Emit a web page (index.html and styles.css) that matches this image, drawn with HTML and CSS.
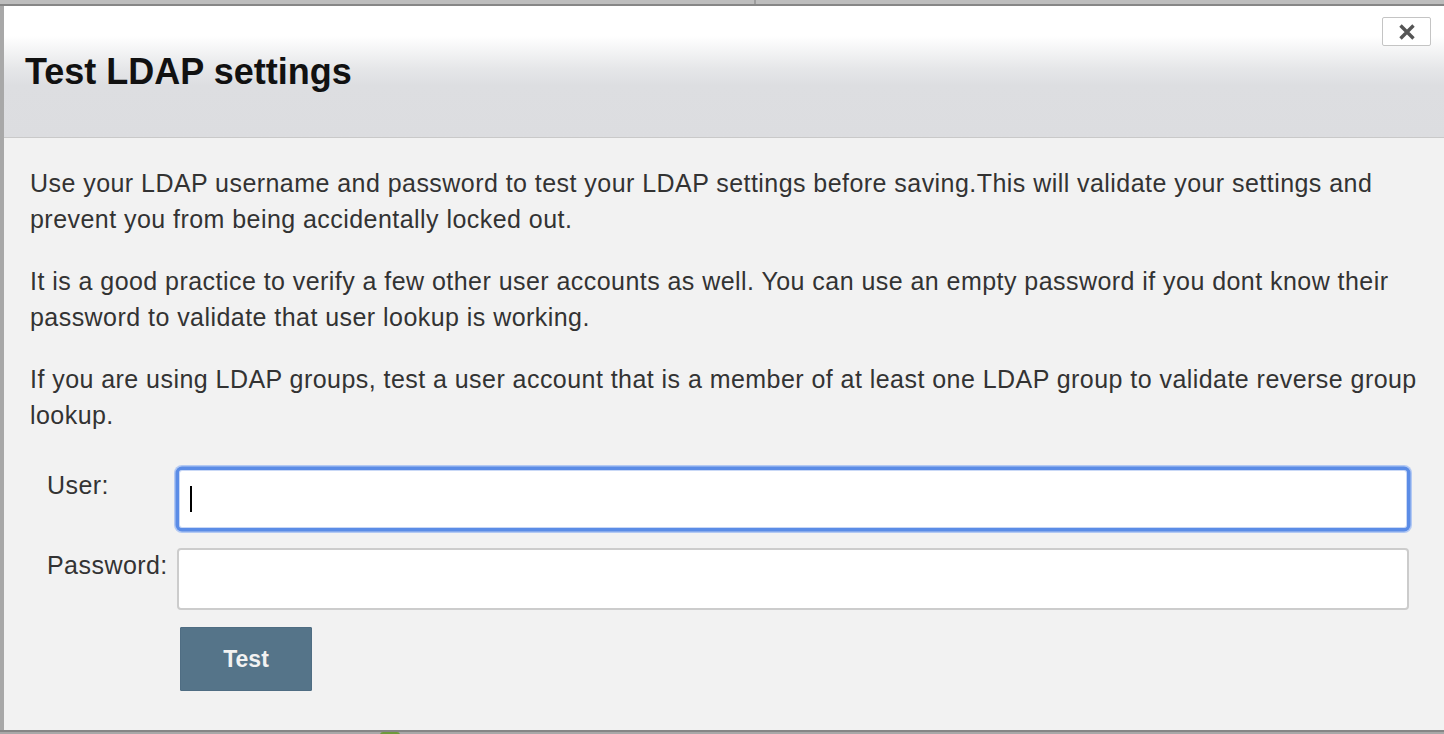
FILE: index.html
```html
<!DOCTYPE html>
<html lang="en">
<head>
<meta charset="utf-8">
<title>Test LDAP settings</title>
<link rel="stylesheet" href="styles.css">
</head>
<body>
<div class="topstrip">
  <div class="pane pane-left"></div>
  <div class="pane pane-right"></div>
</div>
<div class="stage">
  <div class="dialog">
    <div class="dialog-header">
      <h1 class="dialog-title">Test LDAP settings</h1>
      <button class="close-btn" type="button" aria-label="Close">
        <svg width="20" height="16" viewBox="0 0 20 16" aria-hidden="true">
          <path d="M3.5 1.5 L16.5 14.5 M16.5 1.5 L3.5 14.5" stroke="#555" stroke-width="3.4" stroke-linecap="butt"/>
        </svg>
      </button>
    </div>
    <div class="dialog-body">
      <p>Use your LDAP username and password to test your LDAP settings before saving.This will validate your settings and prevent you from being accidentally locked out.</p>
      <p>It is a good practice to verify a few other user accounts as well. You can use an empty password if you dont know their password to validate that user lookup is working.</p>
      <p>If you are using LDAP groups, test a user account that is a member of at least one LDAP group to validate reverse group lookup.</p>
      <form class="ldap-form" onsubmit="return false">
        <label class="field-label" for="ldap-user">User:</label>
        <div class="field-wrap">
          <input id="ldap-user" class="field-input is-focused" type="text">
          <span class="caret"></span>
        </div>
        <label class="field-label" for="ldap-pass">Password:</label>
        <div class="field-wrap">
          <input id="ldap-pass" class="field-input" type="password">
        </div>
        <div class="actions">
          <button class="test-btn" type="submit">Test</button>
        </div>
      </form>
    </div>
  </div>
</div>
<div class="bottomstrip">
  <span class="leaf"></span>
</div>
</body>
</html>
```

FILE: styles.css
```css
html, body {
  margin: 0;
  padding: 0;
  height: 734px;
  overflow: hidden;
}

body {
  background: #a8a8a8;
  font-family: "Liberation Sans", Arial, Helvetica, sans-serif;
  display: flex;
  flex-direction: column;
}

.topstrip {
  height: 4px;
  display: flex;
  background: #bdbdbd;
  border-bottom: 2px solid #868686;
}

.pane-left {
  width: 754px;
  border-right: 2px solid #9d9d9d;
}

.pane-right {
  flex: 1;
}

.stage {
  padding-left: 4px;
}

.dialog {
  background: #f2f2f2;
  height: 724px;
  display: flex;
  flex-direction: column;
}

.dialog-header {
  position: relative;
  height: 131px;
  border-bottom: 1px solid #c9c9c9;
  background: linear-gradient(to bottom, #ffffff 0px, #ffffff 30px, #e6e7e9 62px, #dddee1 80px, #dcdde0 100%);
  padding-left: 21px;
  display: flex;
  align-items: flex-start;
}

.dialog-title {
  margin: 45px 0 0;
  font-size: 36px;
  line-height: 42px;
  font-weight: bold;
  color: #111;
}

.close-btn {
  position: absolute;
  top: 11px;
  right: 13px;
  width: 49px;
  height: 29px;
  padding: 0;
  background: #fff;
  border: 1px solid #c4c4c4;
  border-radius: 2px;
  display: flex;
  align-items: center;
  justify-content: center;
}

.dialog-body {
  flex: 1;
  padding: 28px 20px 0 26px;
  color: #333;
  font-size: 25px;
  letter-spacing: 0.45px;
  line-height: 35.5px;
}

.dialog-body p {
  margin: 0 0 27px;
}

.ldap-form {
  margin-top: 0;
  padding-top: 8px;
  display: grid;
  grid-template-columns: 130px 1fr;
  row-gap: 18px;
  padding-left: 17px;
  padding-right: 15px;
}

.field-label {
  color: #333;
  line-height: 35px;
  white-space: nowrap;
}

.field-wrap {
  position: relative;
}

.field-input {
  display: block;
  box-sizing: border-box;
  width: 100%;
  height: 62px;
  margin: 0;
  border: 2px solid #cccccc;
  border-radius: 4px;
  background: #fff;
  font: inherit;
  padding: 0 12px;
  outline: none;
}

.field-input.is-focused {
  border: 2px solid #5b8ce6;
  box-shadow: 0 0 0 1.5px #5b8ce6, 0 0 0 3px #b3c9f3, inset 0 0 0 1px #c9d8f6;
  border-radius: 5px;
}

.caret {
  position: absolute;
  left: 13px;
  top: 18px;
  width: 2px;
  height: 26px;
  background: #000;
}

.actions {
  grid-column: 2;
  margin-top: -1px;
  padding-left: 3px;
}

.test-btn {
  width: 132px;
  height: 64px;
  background: #557489;
  border: 1px solid #4f6d83;
  border-radius: 1px;
  color: #f2f2f2;
  font-family: "Liberation Sans", Arial, Helvetica, sans-serif;
  font-size: 23px;
  letter-spacing: 0;
  font-weight: bold;
  padding: 0;
}

.bottomstrip {
  height: 2px;
  border-top: 2px solid #868686;
  background: #a8a8a8;
}

.leaf {
  display: block;
  margin-left: 380px;
  width: 20px;
  height: 3px;
  background: #6f9a3c;
  border-radius: 10px 10px 0 0;
}
```
